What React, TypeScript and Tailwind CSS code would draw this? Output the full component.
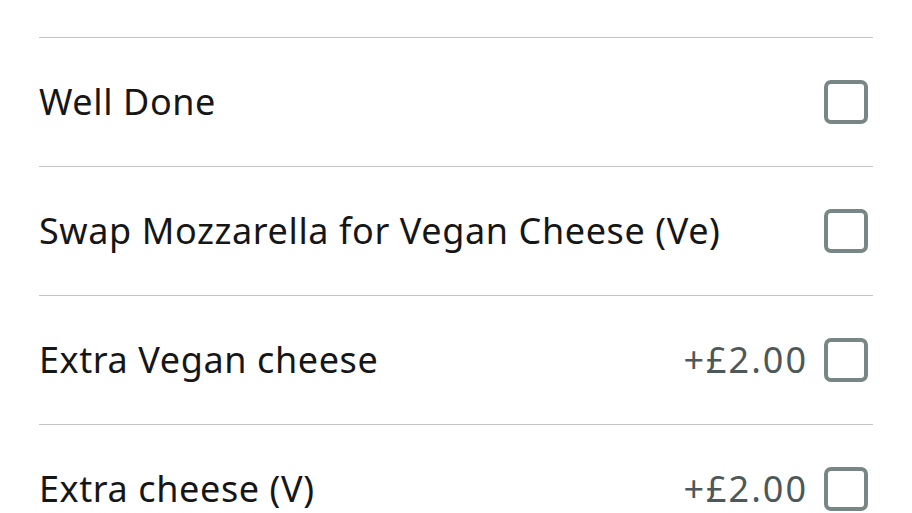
const options = [
  { label: "Well Done", price: "" },
  { label: "Swap Mozzarella for Vegan Cheese (Ve)", price: "" },
  { label: "Extra Vegan cheese", price: "+£2.00" },
  { label: "Extra cheese (V)", price: "+£2.00" },
];

const App = () => {
  return (
    <div className="w-[912px] h-[513px] overflow-hidden bg-white px-[39px] pt-[37px] font-['Noto_Sans',sans-serif]">
      {options.map((opt) => (
        <label
          key={opt.label}
          className="flex items-center justify-between h-[129px] border-t border-[#c4c4c4] cursor-pointer"
        >
          <span className="text-[36px] text-[#161616] tracking-[0.6px]">{opt.label}</span>
          <div className="flex items-center gap-[16px] mr-[5px]">
            {opt.price && <span className="text-[36px] text-[#4d5858] tracking-[2px]">{opt.price}</span>}
            <span className="block w-[44px] h-[44px] border-[4px] border-[#788686] rounded-[7px]"></span>
          </div>
        </label>
      ))}
    </div>
  );
};
export default App;
